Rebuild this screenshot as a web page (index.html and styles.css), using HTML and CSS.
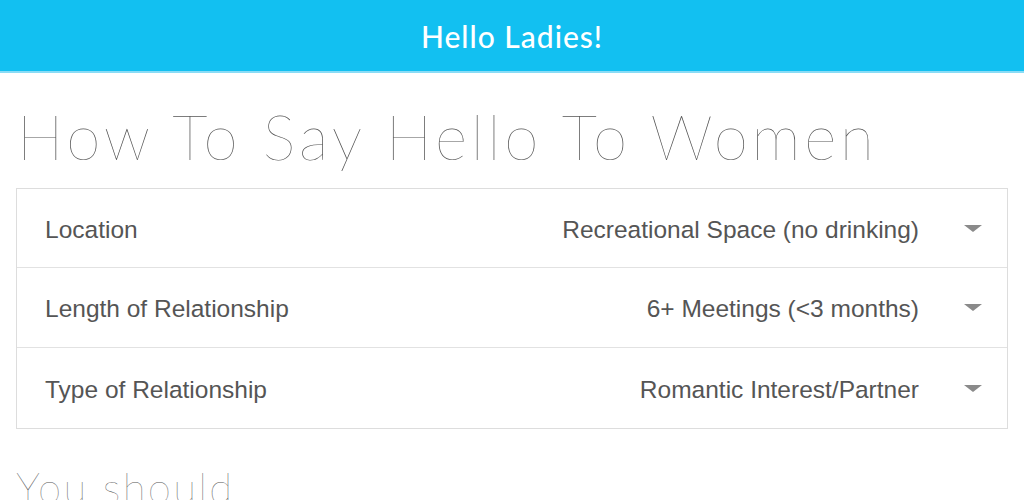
FILE: index.html
```html
<!DOCTYPE html>
<html>
<head>
<meta charset="utf-8">
<link rel="stylesheet" href="styles.css">
</head>
<body>
<header class="topbar">Hello Ladies!</header>
<main class="content">
  <h1 class="title">How To Say Hello To Women</h1>
  <div class="card">
    <div class="row">
      <span class="label">Location</span>
      <span class="value">Recreational Space (no drinking)</span>
      <span class="caret"></span>
    </div>
    <div class="row">
      <span class="label">Length of Relationship</span>
      <span class="value">6+ Meetings (&lt;3 months)</span>
      <span class="caret"></span>
    </div>
    <div class="row">
      <span class="label">Type of Relationship</span>
      <span class="value">Romantic Interest/Partner</span>
      <span class="caret"></span>
    </div>
  </div>
  <h2 class="subtitle">You should...</h2>
</main>
</body>
</html>
```
FILE: styles.css
```css
html, body {
  margin: 0;
  padding: 0;
  background: #ffffff;
  overflow: hidden;
}
body {
  font-family: "Liberation Sans", Arial, sans-serif;
}
.topbar {
  height: 71px;
  line-height: 73px;
  background: #12c0f1;
  border-bottom: 2px solid #8adcf6;
  color: #ffffff;
  text-align: center;
  font-family: "Lato", sans-serif;
  font-weight: 500;
  font-size: 30px;
  letter-spacing: 1px;
}
.content {
  padding: 0 16px;
}
.title {
  margin: 0 0 9px 0;
  padding: 20px 0 0 1px;
  font-family: "Lato", sans-serif;
  font-weight: 100;
  font-size: 62px;
  line-height: 86px;
  letter-spacing: 3.8px;
  color: #555555;
  white-space: nowrap;
}
.card {
  border: 1px solid #dddddd;
}
.row {
  display: flex;
  align-items: center;
  height: 79px;
  box-sizing: border-box;
  padding: 3px 25px 0 28px;
  border-bottom: 1px solid #e2e2e2;
  font-size: 24.5px;
  color: #555555;
}
.row:last-child {
  border-bottom: none;
  height: 79px;
}
.row + .row {
  height: 80px;
}
.label {
  flex: 1;
}
.value {
  margin-right: 45px;
}
.caret {
  width: 0;
  height: 0;
  margin-top: -3px;
  border-left: 9px solid transparent;
  border-right: 9px solid transparent;
  border-top: 7px solid #8a8a8a;
}
.subtitle {
  margin: 0;
  padding: 30px 0 0 0;
  font-family: "Lato", sans-serif;
  font-weight: 100;
  font-size: 42px;
  line-height: 56px;
  letter-spacing: 2.3px;
  color: #555555;
  white-space: nowrap;
}
```
